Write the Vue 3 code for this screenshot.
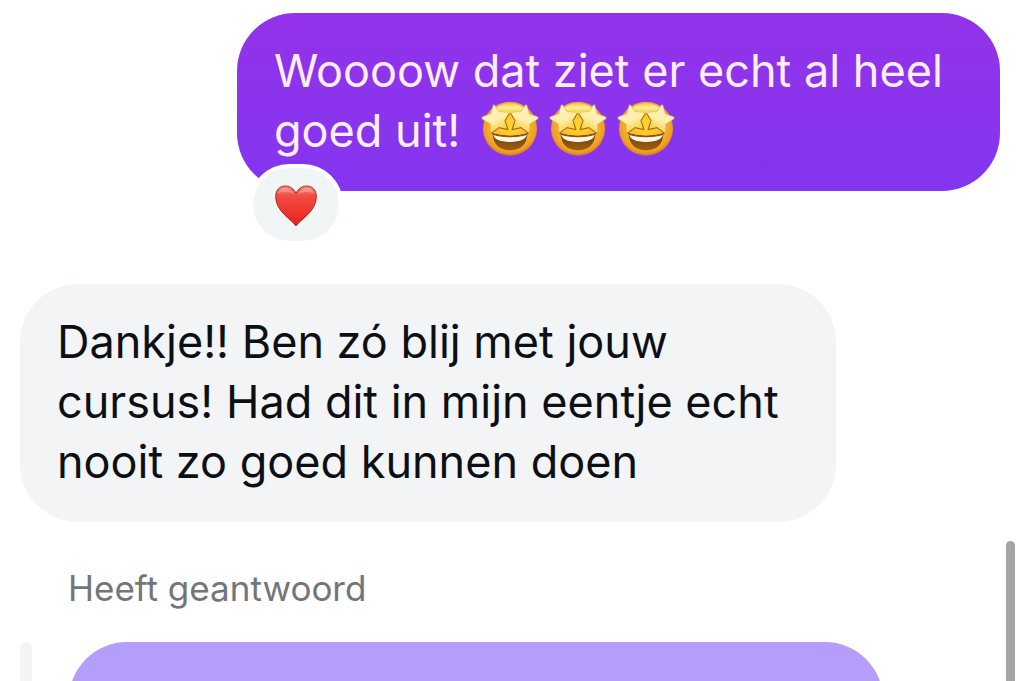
<script setup>
const sent = 'Woooow dat ziet er echt al heel goed uit!'
const received = 'Dankje!! Ben zó blij met jouw cursus! Had dit in mijn eentje echt nooit zo goed kunnen doen'
const starStruckCount = 3
</script>

<template>
  <main class="chat">
    <svg class="defs" aria-hidden="true">
      <defs>
        <radialGradient id="face" cx="0.5" cy="0.45" r="0.55">
          <stop offset="0" stop-color="#ffd629" />
          <stop offset="0.6" stop-color="#fbb92d" />
          <stop offset="0.88" stop-color="#f09c25" />
          <stop offset="1" stop-color="#d07a28" />
        </radialGradient>
        <linearGradient id="shine" x1="0" y1="0" x2="0" y2="1">
          <stop offset="0" stop-color="#f6bd45" />
          <stop offset="0.4" stop-color="#ffef9c" />
          <stop offset="1" stop-color="#f9cf48" />
        </linearGradient>
        <linearGradient id="star-left" x1="0.2" y1="0" x2="0.75" y2="1">
          <stop offset="0" stop-color="#fff1d0" />
          <stop offset="0.55" stop-color="#ffefa8" />
          <stop offset="1" stop-color="#f3c427" />
        </linearGradient>
        <linearGradient id="mouth" x1="0" y1="0" x2="0" y2="1">
          <stop offset="0" stop-color="#6c3c0a" />
          <stop offset="1" stop-color="#9c6212" />
        </linearGradient>
        <linearGradient id="heart" x1="0" y1="0" x2="0" y2="1">
          <stop offset="0" stop-color="#f58a80" />
          <stop offset="0.25" stop-color="#f24b42" />
          <stop offset="0.7" stop-color="#ee3229" />
          <stop offset="1" stop-color="#d3261e" />
        </linearGradient>
        <g id="eye">
          <path d="M43 27 Q46 25 48 29 L60 47 L88 49 Q93 51 90 55 L79 74 L87 98 Q88 104 82 102 L60 95 L39 111 Q34 112 35 106 L34 84 L10 69 Q6 65 11 62 L35 54 Z" fill="url(#star-left)" stroke="#e8b84c" stroke-width="2" stroke-linejoin="round" />
          <path d="M91 52 L78 74 L87 101 L60 95 L38 111" fill="none" stroke="#9a6010" stroke-width="3" stroke-linejoin="round" />
        </g>
        <symbol id="star-struck" viewBox="6 12 174 174">
          <circle cx="93" cy="98" r="81" fill="url(#face)" />
          <path d="M40 48 Q60 21 93 21 Q126 21 146 48 Q120 52 93 52 Q66 52 40 48 Z" fill="url(#shine)" />
          <path d="M41 112 Q93 126 145 112 Q143 162 93 163 Q43 162 41 112 Z" fill="url(#mouth)" />
          <path d="M43 115 Q93 129 143 115 Q142 137 93 138 Q44 137 43 115 Z" fill="#fff8ec" />
          <path d="M36 109 Q42 116 54 118 Q93 126 132 118 Q144 116 150 109" fill="none" stroke="#965009" stroke-width="4" stroke-linecap="round" />
          <use href="#eye" />
          <use href="#eye" transform="translate(186 0) scale(-1 1)" />
        </symbol>
      </defs>
    </svg>

    <section class="outgoing">
      <p class="bubble purple">
        {{ sent }}
        <span class="emojis" role="img" aria-label="Drie gezichten met sterretjesogen">
          <svg v-for="n in starStruckCount" :key="n" class="emoji"><use href="#star-struck" /></svg>
        </span>
      </p>
      <button class="reaction" type="button" aria-label="Hartje">
        <svg class="heart" viewBox="0 0 126 126">
          <path d="M63 123 C52 105 2 80 2 35 C2 14 15 3 31 3 C46 3 57 12 63 25 C69 12 80 3 95 3 C111 3 124 14 124 35 C124 80 74 105 63 123 Z" fill="url(#heart)" stroke="#a92b29" stroke-width="3" />
          <path d="M9 25 Q15 9 32 9 Q47 10 55 26 Q33 15 9 25 Z M71 26 Q79 10 94 9 Q111 9 117 25 Q93 15 71 26 Z" fill="#ffb1a5" opacity="0.5" />
        </svg>
      </button>
    </section>

    <p class="bubble gray">{{ received }}</p>

    <p class="reply-label">Heeft geantwoord</p>
    <div class="quote">
      <span class="quote-bar"></span>
      <div class="quote-bubble"></div>
    </div>
    <div class="scrollbar"></div>
  </main>
</template>

<style>
body {
  background: #fff;
}
</style>

<style scoped>
.chat {
  position: relative;
  box-sizing: border-box;
  height: 100vh;
  overflow: hidden;
  padding: 13px 24px 0 20px;
  display: flex;
  flex-direction: column;
  align-items: flex-start;
  font-family: Inter, "Liberation Sans", sans-serif;
}

.defs {
  position: absolute;
  width: 0;
  height: 0;
}

.outgoing {
  position: relative;
  align-self: flex-end;
  margin-bottom: 93px;
}

.bubble {
  box-sizing: border-box;
  flex: none;
  margin: 0;
  padding: 28px 37px 30px;
  border-radius: 58px;
  font-size: 45px;
  line-height: 60px;
}

.purple {
  max-width: 763px;
  background: linear-gradient(#9333ea, #8335ef);
  color: #fdeeff;
}

.gray {
  max-width: 816px;
  background: #f2f4f6;
  color: #0c1014;
}

.emojis {
  display: inline-flex;
  gap: 10px;
  height: 58px;
  margin: -12px 0 0 8px;
  vertical-align: -11px;
}

.emoji {
  width: 58px;
  height: 58px;
}

.reaction {
  position: absolute;
  left: 12px;
  bottom: -54px;
  box-sizing: border-box;
  width: 94px;
  height: 81px;
  padding: 2px 0 0;
  display: flex;
  align-items: center;
  justify-content: center;
  border: 4px solid #fff;
  border-radius: 42px;
  background: #f2f5f6;
}

.heart {
  width: 42px;
  height: 42px;
}

.reply-label {
  flex: none;
  margin: 43px 0 0 48px;
  color: #737679;
  font-size: 35px;
  line-height: 46px;
}

.quote {
  flex: none;
  align-self: stretch;
  display: flex;
  gap: 37px;
  margin-top: 31px;
}

.quote-bar {
  width: 12px;
  border-radius: 6px;
  background: #f2f3f5;
}

.quote-bubble {
  flex: 0 1 814px;
  height: 178px;
  border-radius: 58px;
  background: #b59dfc;
}

.scrollbar {
  position: absolute;
  top: 541px;
  right: 9px;
  bottom: -9px;
  width: 9px;
  border-radius: 5px;
  background: #a5a5a5;
}
</style>
